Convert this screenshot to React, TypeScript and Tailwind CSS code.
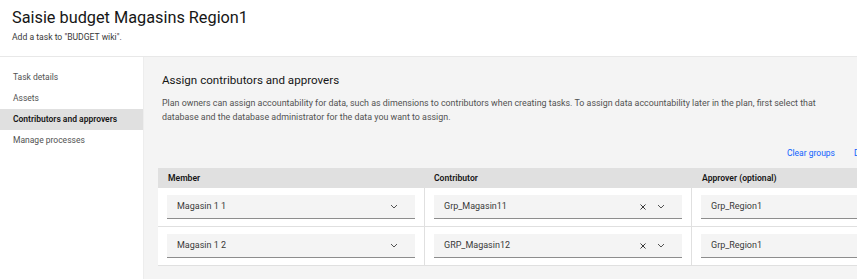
import React from 'react'

function Chevron() {
  return (
    <svg width="8" height="5" viewBox="0 0 8 5" className="shrink-0">
      <path d="M1 1 L4 4 L7 1" fill="none" stroke="#525252" strokeWidth="1" />
    </svg>
  )
}

function Cross() {
  return (
    <svg width="6" height="6" viewBox="0 0 6 6" className="shrink-0">
      <path d="M0.5 0.5 L5.5 5.5 M5.5 0.5 L0.5 5.5" fill="none" stroke="#393939" strokeWidth="1" />
    </svg>
  )
}

function Field({ value, clear, chevron }: { value: string; clear?: boolean; chevron?: boolean }) {
  return (
    <div className="h-[24px] bg-[#f4f4f4] border-b border-[#8d8d8d] flex items-center pl-[10px] pr-[17px] text-[9px] text-[#393939]">
      <span className="flex-1">{value}</span>
      {clear && (
        <span className="mr-[11px] flex items-center">
          <Cross />
        </span>
      )}
      {chevron && <Chevron />}
    </div>
  )
}

export default function App() {
  const nav = ['Task details', 'Assets', 'Contributors and approvers', 'Manage processes']
  const rows = [
    { member: 'Magasin 1 1', contributor: 'Grp_Magasin11', approver: 'Grp_Region1' },
    { member: 'Magasin 1 2', contributor: 'GRP_Magasin12', approver: 'Grp_Region1' },
  ]

  return (
    <div className="w-[857px] h-[279px] overflow-hidden bg-white text-[#161616]" style={{ fontFamily: 'Roboto, "Noto Sans", sans-serif' }}>
      {/* Header */}
      <div className="h-[57px] border-b border-[#e8e8e8] pl-[12px] pt-[6px]">
        <h1 className="text-[16.3px] leading-[24px] text-[#161616]">Saisie budget Magasins Region1</h1>
        <p className="text-[8.6px] leading-[12px] mt-[1px] text-[#393939]">Add a task to "BUDGET wiki".</p>
      </div>

      <div className="flex h-[222px]">
        {/* Sidebar */}
        <div className="w-[144px] shrink-0 pt-[10px] border-r border-[#ededed]">
          {nav.map((item) => (
            <div
              key={item}
              className={
                item === 'Contributors and approvers'
                  ? 'h-[21px] flex items-center pl-[13px] text-[8.5px] bg-[#e0e0e0] font-semibold text-[#161616]'
                  : 'h-[21px] flex items-center pl-[13px] text-[8.5px] text-[#525252]'
              }
            >
              {item}
            </div>
          ))}
        </div>

        {/* Main */}
        <div className="flex-1 bg-[#f4f4f4] pl-[14px] overflow-hidden">
          <div className="pl-[4px] pt-[14px]">
            <h2 className="text-[11.6px] leading-[18px] text-[#161616]">Assign contributors and approvers</h2>
            <p className="mt-[7px] text-[8.9px] leading-[14px] text-[#525252] w-[665px]">
              Plan owners can assign accountability for data, such as dimensions to contributors when creating tasks. To assign data accountability later in the plan, first select that database and the database administrator for the data you want to assign.
            </p>
          </div>

          <div className="flex gap-[19px] mt-[22px] ml-[629px] h-[14px] items-center text-[8.5px] text-[#0f62fe] whitespace-nowrap">
            <span>Clear groups</span>
            <span>Delete</span>
          </div>

          <div className="mt-[8px] w-[801px]">
            <div className="grid grid-cols-3 h-[20px] bg-[#e0e0e0] items-center text-[8.6px] font-semibold text-[#161616]">
              <div className="pl-[10px]">Member</div>
              <div className="pl-[9px]">Contributor</div>
              <div className="pl-[10px]">Approver (optional)</div>
            </div>
            {rows.map((r) => (
              <div key={r.member} className="grid grid-cols-3 bg-white border-b border-[#e0e0e0]">
                <div className="px-[9px] pt-[7px] pb-[7px] border-r border-[#e0e0e0]">
                  <Field value={r.member} chevron />
                </div>
                <div className="px-[9px] pt-[7px] pb-[7px] border-r border-[#e0e0e0]">
                  <Field value={r.contributor} clear chevron />
                </div>
                <div className="px-[9px] pt-[7px] pb-[7px]">
                  <Field value={r.approver} />
                </div>
              </div>
            ))}
          </div>
        </div>
      </div>
    </div>
  )
}
